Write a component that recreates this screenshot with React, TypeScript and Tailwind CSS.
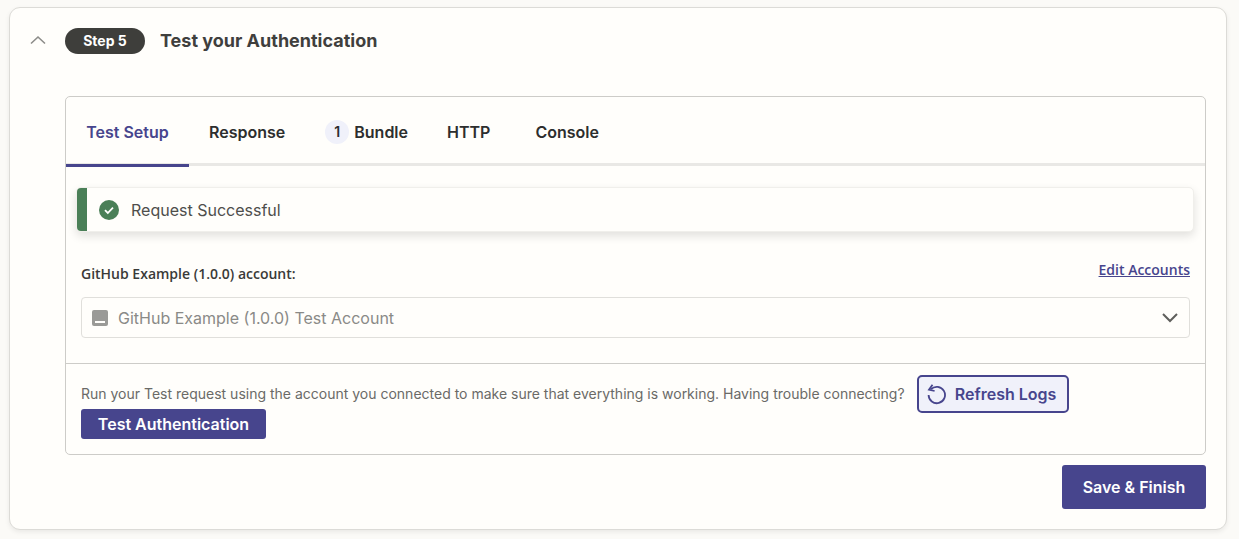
import React from "react";

const Tab = ({ children, active = false, cls = "" }: { children: React.ReactNode; active?: boolean; cls?: string }) => (
  <div className={`flex items-center h-[70px] pt-[2px] border-b-[3px] -mb-[1px] text-[16px] font-semibold ${active ? "border-[#47458d] text-[#47458d]" : "border-transparent text-[#2d2e2e]"} ${cls}`}>
    {children}
  </div>
);

export default function App() {
  return (
    <div className="w-[1239px] h-[539px] overflow-hidden bg-[#fbfaf7] pt-[7px] pl-[9px] font-['Inter',sans-serif]">
      <div className="w-[1218px] h-[523px] bg-[#fffefb] border border-[#dcdbd7] rounded-[11px] shadow-[0_2px_5px_rgba(0,0,0,0.07)]">
        <div className="flex items-center h-[64px] pl-[19px]">
          <svg width="18" height="10" viewBox="0 0 18 10" fill="none" className="mr-[18px] mb-[1px]">
            <path d="M2 8.5 9 2l7 6.5" stroke="#8c8c89" strokeWidth="1.6" />
          </svg>
          <div className="w-[80px] h-[26px] mt-[2px] pb-[1px] rounded-full bg-[#3e3e3b] text-white text-[14px] font-bold flex items-center justify-center">Step 5</div>
          <div className="ml-[15px] text-[18px] font-bold text-[#3f3f3d]">Test your Authentication</div>
        </div>

        <div className="ml-[55px] mt-[24px] w-[1141px] h-[359px] border border-[#cdccc8] rounded-[5px]">
          <div className="flex h-[69px] border-b-[3px] border-[#e9e8e5]">
            <Tab active cls="w-[123px] justify-center">Test Setup</Tab>
            <Tab cls="pl-[20px] pr-[20px]">Response</Tab>
            <Tab cls="pl-[20px] pr-[20px]">
              <span className="w-[24px] h-[24px] rounded-full bg-[#f0f1fa] flex items-center justify-center text-[14px] mr-[5px]">1</span>
              <span>Bundle</span>
            </Tab>
            <Tab cls="pl-[19px] pr-[25px]">HTTP</Tab>
            <Tab cls="pl-[20px]">Console</Tab>
          </div>

          <div className="ml-[10px] mt-[21px] w-[1118px] h-[45px] flex items-center bg-[#fffefb] border border-[#f0efeb] rounded-[5px] overflow-hidden shadow-[0_4px_10px_rgba(0,0,0,0.12)]">
            <div className="w-[10px] h-full bg-[#4a7f57] shrink-0" />
            <svg width="20" height="20" viewBox="0 0 20 20" className="ml-[12px] shrink-0">
              <circle cx="10" cy="10" r="10" fill="#4a7f57" />
              <path d="M6 10.2 8.8 13l5.2-5.4" fill="none" stroke="#fff" strokeWidth="1.8" />
            </svg>
            <span className="ml-[12px] text-[16px] text-[#4e4e4b]">Request Successful</span>
          </div>

          <div className="flex justify-between mx-[15px] mt-[27px] h-[38px] font-['Open_Sans',sans-serif] text-[14px] font-semibold">
            <span className="text-[#3a3a38] mt-[4px]">GitHub Example (1.0.0) account:</span>
            <a className="text-[#47458d] underline">Edit Accounts</a>
          </div>

          <div className="mx-[15px] h-[41px] w-[1109px] flex items-center border border-[#e0dfdb] rounded-[4px] pl-[10px] pr-[10px]">
            <svg width="16" height="16" viewBox="0 0 16 16" className="shrink-0">
              <rect width="16" height="16" rx="2" fill="#9a9a97" />
              <rect x="3" y="11" width="10" height="2" fill="#fffefb" />
            </svg>
            <span className="ml-[10px] text-[16px] text-[#8a8a87]">GitHub Example (1.0.0) Test Account</span>
            <svg width="18" height="11" viewBox="0 0 18 11" fill="none" className="ml-auto">
              <path d="M2 2l7 7 7-7" stroke="#5f5f5c" strokeWidth="2" />
            </svg>
          </div>

          <div className="mt-[25px] border-t border-[#cdccc8] px-[15px] pt-[15px]">
            <div className="flex items-center h-[30px]">
              <span className="text-[14px] text-[#6a6a67] -mt-[1px]">Run your Test request using the account you connected to make sure that everything is working. Having trouble connecting?</span>
              <button className="ml-[12px] w-[152px] h-[38px] shrink-0 flex items-center justify-center gap-[6px] border-2 border-[#47458d] rounded-[5px] bg-[#f0f1fa] text-[#47458d] text-[16px] font-semibold">
                <svg width="20" height="22" viewBox="0 0 20 22" fill="none" className="-ml-[3px] mr-[3px]">
                  <path d="M5 6.2A8.2 8.2 0 1 1 2.6 12" stroke="#47458d" strokeWidth="1.8" />
                  <path d="M6.5 1.8 3 6.6l5.6 1.4" stroke="#47458d" strokeWidth="1.8" />
                </svg>
                Refresh Logs
              </button>
            </div>
            <button className="block w-[185px] h-[30px] bg-[#47458d] rounded-[3px] text-white text-[16px] font-semibold">Test Authentication</button>
          </div>
        </div>

        <div className="flex justify-end pr-[20px] mt-[10px]">
          <button className="w-[144px] h-[44px] bg-[#47458d] rounded-[3px] text-white text-[16px] font-semibold">Save &amp; Finish</button>
        </div>
      </div>
    </div>
  );
}
